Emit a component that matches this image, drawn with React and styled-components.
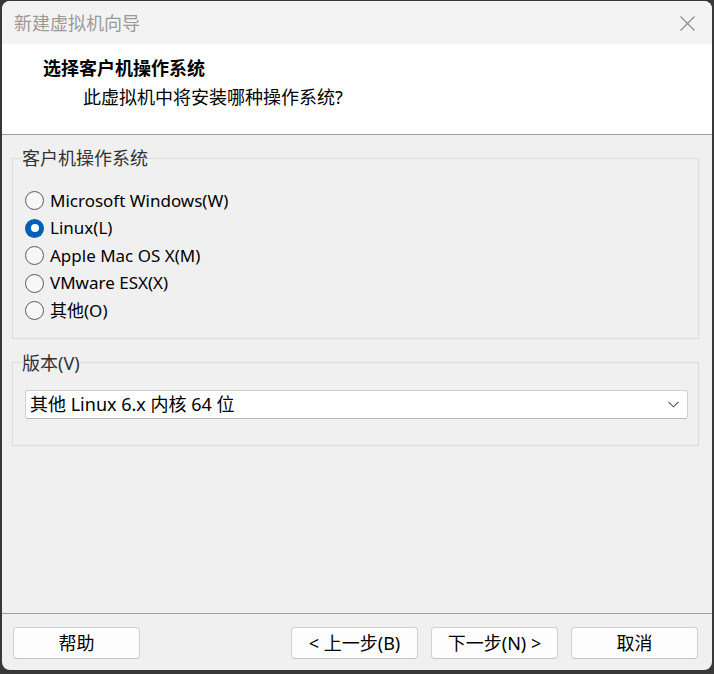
import React, { useState } from "react";
import styled, { createGlobalStyle } from "styled-components";

const GlobalStyle = createGlobalStyle`
  html, body {
    margin: 0;
    padding: 0;
    background: #383838;
  }
  body {
    font-family: "Noto Sans", "Noto Sans CJK SC", sans-serif;
    font-size: 18px;
    color: #000;
  }
`;

const osList = [
  { id: "win", label: "Microsoft Windows(W)" },
  { id: "linux", label: "Linux(L)" },
  { id: "mac", label: "Apple Mac OS X(M)" },
  { id: "esx", label: "VMware ESX(X)" },
  { id: "other", label: "其他(O)" },
];

export default function App() {
  const [os, setOs] = useState("linux");

  return (
    <>
      <GlobalStyle />
      <StyledWindow>
        <StyledTitleBar>
          <StyledWindowTitle>新建虚拟机向导</StyledWindowTitle>
          <StyledClose aria-label="关闭">
            <svg width="15" height="15" viewBox="0 0 15 15">
              <path d="M0.5 0.5 L14.5 14.5 M14.5 0.5 L0.5 14.5" stroke="#8c8c8c" strokeWidth="1.2" fill="none" />
            </svg>
          </StyledClose>
        </StyledTitleBar>

        <StyledHeader>
          <StyledHeaderTitle>选择客户机操作系统</StyledHeaderTitle>
          <StyledHeaderSub>此虚拟机中将安装哪种操作系统?</StyledHeaderSub>
        </StyledHeader>

        <StyledBody>
          <StyledGroup $pad="19px 12px 13px 12px">
            <StyledLegend>客户机操作系统</StyledLegend>
            {osList.map((item) => (
              <StyledRadioRow key={item.id} onClick={() => setOs(item.id)}>
                <StyledRadio $checked={os === item.id} />
                <span>{item.label}</span>
              </StyledRadioRow>
            ))}
          </StyledGroup>

          <StyledGroup $pad="17px 10px 26px 12px">
            <StyledLegend>版本(V)</StyledLegend>
            <StyledSelect>
              <span>其他 Linux 6.x 内核 64 位</span>
              <svg width="11" height="7" viewBox="0 0 11 7">
                <path d="M0.5 0.8 L5.5 5.8 L10.5 0.8" stroke="#555" strokeWidth="1.1" fill="none" />
              </svg>
            </StyledSelect>
          </StyledGroup>
        </StyledBody>

        <StyledFooter>
          <StyledButton>帮助</StyledButton>
          <StyledSpacer />
          <StyledButton>&lt; 上一步(B)</StyledButton>
          <StyledButton>下一步(N) &gt;</StyledButton>
          <StyledButton>取消</StyledButton>
        </StyledFooter>
      </StyledWindow>
    </>
  );
}

const StyledWindow = styled.div`
  margin: 1px 2px 0 2px;
  width: 710px;
  height: 669px;
  border-radius: 8px;
  overflow: hidden;
  background: #f0f0f0;
  display: flex;
  flex-direction: column;
`;

const StyledTitleBar = styled.div`
  height: 43px;
  flex-shrink: 0;
  background: #f3f3f3;
  display: flex;
  align-items: center;
  justify-content: space-between;
  padding: 0 17px 0 12px;
`;

const StyledWindowTitle = styled.span`
  color: #9a9a9a;
  font-size: 18px;
  line-height: 20px;
  margin-top: 1px;
`;

const StyledClose = styled.div`
  display: flex;
  width: 15px;
  height: 15px;
  margin-top: 1px;
`;

const StyledHeader = styled.div`
  height: 91px;
  flex-shrink: 0;
  box-sizing: border-box;
  background: #fff;
  border-bottom: 1px solid #a0a0a0;
  padding: 13px 0 0 41px;
  display: flex;
  flex-direction: column;
`;

const StyledHeaderTitle = styled.div`
  font-weight: 700;
  line-height: 22px;
`;

const StyledHeaderSub = styled.div`
  line-height: 22px;
  margin-top: 7px;
  padding-left: 40px;
`;

const StyledBody = styled.div`
  flex: 1;
  padding: 13px 13px 0 10px;
  display: flex;
  flex-direction: column;
  gap: 14px;
  border-bottom: 1px solid #a0a0a0;
`;

const StyledGroup = styled.fieldset`
  margin: 0;
  padding: ${(p) => p.$pad};
  border: 1px solid #dcdcdc;
  min-width: 0;
  display: flex;
  flex-direction: column;
`;

const StyledLegend = styled.legend`
  padding: 0;
  margin-left: -3px;
  line-height: 20px;
  color: #333;
`;

const StyledRadioRow = styled.label`
  height: 27.5px;
  display: flex;
  align-items: center;
  gap: 6px;
  cursor: pointer;
  font-size: 17px;
  line-height: 20px;
`;

const StyledRadio = styled.span`
  width: 19px;
  height: 19px;
  box-sizing: border-box;
  border-radius: 50%;
  flex-shrink: 0;
  border: ${(p) => (p.$checked ? "none" : "1px solid #5c5c5c")};
  background: ${(p) => (p.$checked ? "#005fb8" : "#f7f7f7")};
  display: flex;
  align-items: center;
  justify-content: center;

  &::after {
    content: "";
    display: ${(p) => (p.$checked ? "block" : "none")};
    width: 8px;
    height: 8px;
    border-radius: 50%;
    background: #fff;
  }
`;

const StyledSelect = styled.div`
  height: 29px;
  box-sizing: border-box;
  background: #fff;
  border: 1px solid #d0d0d0;
  border-bottom-color: #b8b8b8;
  border-radius: 3px;
  display: flex;
  align-items: center;
  justify-content: space-between;
  padding: 0 8px 0 4px;
  line-height: 20px;
`;

const StyledFooter = styled.div`
  height: 56px;
  flex-shrink: 0;
  box-sizing: border-box;
  padding: 13px 14px 0 11px;
  display: flex;
  gap: 13px;
`;

const StyledSpacer = styled.div`
  flex: 1;
`;

const StyledButton = styled.button`
  width: 127px;
  height: 32px;
  box-sizing: border-box;
  background: #fdfdfd;
  border: 1px solid #d0d0d0;
  border-bottom-color: #c4c4c4;
  border-radius: 4px;
  font-family: "Noto Sans", "Noto Sans CJK SC", sans-serif;
  font-size: 18px;
  line-height: 20px;
  color: #000;
  padding: 0;
`;
